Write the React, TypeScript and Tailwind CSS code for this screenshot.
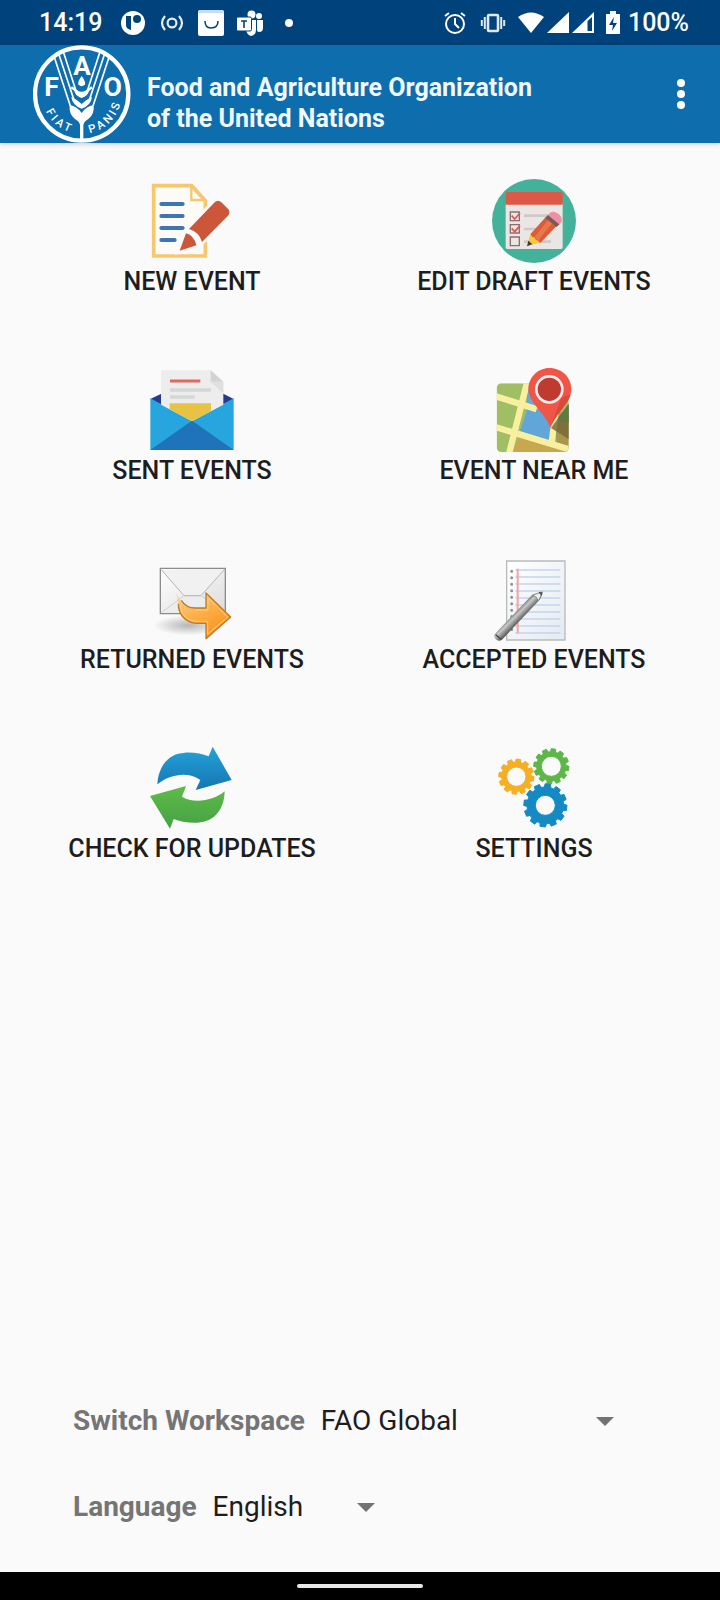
import type { ReactNode } from "react";

function gearPath(cx: number, cy: number, outer: number, root: number, hole: number, teeth = 12) {
	const step = (Math.PI * 2) / teeth;
	const points: string[] = [];
	for (let i = 0; i < teeth; i++) {
		const a = i * step + 0.12;
		for (const [offset, r] of [[-0.34, root], [-0.24, outer], [0.24, outer], [0.34, root]]) {
			const t = a + offset * step;
			points.push(`${(cx + Math.cos(t) * r).toFixed(1)} ${(cy + Math.sin(t) * r).toFixed(1)}`);
		}
	}
	return `M${points.join("L")}ZM${cx + hole} ${cy}a${hole} ${hole} 0 1 0 ${-2 * hole} 0a${hole} ${hole} 0 1 0 ${2 * hole} 0Z`;
}

function Icon({ viewBox, children }: { viewBox: string; children: ReactNode }) {
	return (
		<svg className="size-[84px]" viewBox={viewBox} aria-hidden="true">
			{children}
		</svg>
	);
}

function NewEventIcon() {
	return (
		<Icon viewBox="60 27 252 252">
			<path d="M71 47H185L226 92V258H71Z" fill="#fdfbf6" stroke="#f8c66f" strokeWidth="11" />
			<path d="M184 48V90H224" fill="none" stroke="#f8c66f" strokeWidth="7" />
			<path d="M94 102H158M94 138H158M94 174H158M94 210H134" stroke="#3f74b5" strokeWidth="12" strokeLinecap="round" />
			<path d="M146 244L168 184L252 96Q262 86 272 95L298 120Q303 130 294 140L214 220Z" fill="#fafafa" stroke="#fafafa" strokeWidth="14" />
			<path d="M177 177L254 97Q264 88 274 97L295 118Q302 127 294 137L216 216Q208 186 177 177Z" fill="#cc5639" />
			<path d="M149 242L168 190Q193 197 199 226Z" fill="#cc5639" />
		</Icon>
	);
}

function DraftIcon() {
	return (
		<Icon viewBox="66 27 252 252">
			<circle cx="192" cy="153" r="126" fill="#44b29b" />
			<path d="M107 100H278V232Q278 237 273 237H112Q107 237 107 232Z" fill="#ebe5e3" />
			<path d="M107 104V73Q107 66 114 66H271Q278 66 278 73V104Z" fill="#dd5847" />
			<path d="M162 137H234M162 177H200M162 215H243" stroke="#cfc9c7" strokeWidth="8" />
			<path d="M121 126H148V152H121ZM121 164H148V189H121ZM121 201H148V227H121Z" fill="none" stroke="#8b6f70" strokeWidth="4" />
			<path d="M125 137L134 147L150 129M125 175L134 185L150 167" fill="none" stroke="#d65a51" strokeWidth="5" />
			<path d="M173 226L181 191L208 213Z" fill="#f6c83d" />
			<path d="M181 193L228 140L262 166L213 217Q208 220 204 212Q196 212 194 203Q185 202 181 193Z" fill="#dc5c39" />
			<path d="M193 202L237 147L249 156L204 212Z" fill="#e8784a" />
			<path d="M181 191Q185 202 194 203Q196 212 204 212Q208 220 213 217L187 224L177 215Z" fill="#f6c83d" />
			<path d="M171 229L175 212L187 223Z" fill="#3d3b35" />
			<path d="M226 144L234 134L269 162L260 171Z" fill="#755c59" />
			<path d="M234 135Q241 124 252 125Q275 132 276 150Q275 157 268 163Z" fill="#f28da3" />
		</Icon>
	);
}

function SentIcon() {
	return (
		<Icon viewBox="60 24 252 252">
			<path d="M61 117L94 101H280L311 117L186 190Z" fill="#283a8d" />
			<path d="M61 115L186 183L311 115V270H61Z" fill="#27a5df" />
			<path d="M93 31H242L280 65V134L186 184L93 134Z" fill="#ededed" />
			<path d="M242 31L280 65H242Z" fill="#d2d3d3" />
			<path d="M242 65H280V100Z" fill="#dfdfdf" />
			<path d="M120 63H211" stroke="#de6961" strokeWidth="9" />
			<path d="M120 90H243M120 111H194" stroke="#d5d6d6" strokeWidth="10" />
			<path d="M119 130H243V153L186 184L119 148Z" fill="#e8c343" />
			<path d="M61 270L186 182L311 270Z" fill="#1e73b9" />
		</Icon>
	);
}

function MapIcon() {
	return (
		<Icon viewBox="66 24 252 252">
			<clipPath id="map-sheet">
				<rect x="80" y="70" width="216" height="206" rx="14" />
			</clipPath>
			<g clipPath="url(#map-sheet)">
				<path d="M80 70H296V276H80Z" fill="#a0be63" />
				<path d="M146 232L296 270V290H120Z" fill="#c8a84f" />
				<path d="M174 140L250 158L240 242L150 213Z" fill="#62a5d9" />
				<path d="M172 70H200V138H170Z" fill="#69a9d9" />
				<path d="M246 165L296 150V276L262 250Z" fill="#a7964b" />
				<path d="M72 107L200 148M72 200L304 270M172 64L116 286M256 160L244 256" stroke="#f8f0a0" strokeWidth="19" fill="none" />
				<path d="M243 204L300 126V240Z" fill="#746538" opacity=".8" />
				<path d="M262 178L300 128V190Z" fill="#5c7b43" />
			</g>
			<path d="M238 24C275 24 304 52 304 87C304 128 264 148 241 203C225 157 175 128 175 88C175 52 204 24 238 24Z" fill="#ef5647" />
			<path d="M272 118Q285 105 302 104C292 136 259 160 241 203Z" fill="#dc483c" />
			<circle cx="238" cy="88" r="39" fill="#bf3a2f" stroke="#f8eeee" strokeWidth="8" />
		</Icon>
	);
}

function ReturnedIcon() {
	return (
		<Icon viewBox="60 21 252 252">
			<defs>
				<linearGradient id="letter" x1="0" y1="0" x2="1" y2="1">
					<stop offset="0" stopColor="#fff" />
					<stop offset="1" stopColor="#dcdcdc" />
				</linearGradient>
				<linearGradient id="forward" x1="0" y1="0" x2="0.6" y2="1">
					<stop offset="0" stopColor="#fbd7a0" />
					<stop offset=".5" stopColor="#fcb14a" />
					<stop offset="1" stopColor="#f7941f" />
				</linearGradient>
				<radialGradient id="ground">
					<stop offset="0" stopColor="#999" stopOpacity=".7" />
					<stop offset="1" stopColor="#999" stopOpacity="0" />
				</radialGradient>
			</defs>
			<ellipse cx="175" cy="226" rx="105" ry="30" fill="url(#ground)" />
			<path d="M91 55H286V191H91Z" fill="url(#letter)" stroke="#8b8d8a" strokeWidth="4" />
			<path d="M95 187L162 137H213L282 187" fill="#ececec" stroke="#d2d2d2" strokeWidth="3" />
			<path d="M94 59L162 137H213L283 59" fill="#f1f1f1" stroke="#b5b6b4" strokeWidth="3" />
			<path d="M138 126C150 155 164 173 196 174H228V129L302 201L228 266V220H198C161 217 139 187 145 155Z" fill="url(#forward)" />
			<path d="M154 151C164 167 176 174 196 174H228V129L302 201L228 266V220H198C165 217 145 192 145 161" fill="none" stroke="#bd7b2a" strokeWidth="4" strokeLinejoin="round" />
			<path d="M150 166C155 196 170 211 198 214H233V253L293 201L234 143V180H196" fill="none" stroke="#ffcf85" strokeWidth="3" />
		</Icon>
	);
}

function AcceptedIcon() {
	return (
		<Icon viewBox="66 21 252 252">
			<defs>
				<linearGradient id="sheet" x1="0" y1="0" x2="1" y2="1">
					<stop offset="0" stopColor="#fff" />
					<stop offset="1" stopColor="#e3ebf1" />
				</linearGradient>
				<linearGradient id="barrel" gradientUnits="userSpaceOnUse" x1="134" y1="186" x2="156" y2="208">
					<stop offset="0" stopColor="#777" />
					<stop offset=".35" stopColor="#c9c9c9" />
					<stop offset="1" stopColor="#565656" />
				</linearGradient>
			</defs>
			<path d="M110 33H285V270H110Z" fill="url(#sheet)" stroke="#b9bbbb" strokeWidth="4" />
			<path d="M136 60H271M136 81H271M136 102H271M136 123H271M136 144H271M136 165H271M136 186H271M136 207H271M136 228H271M136 249H271" stroke="#c6d3ea" strokeWidth="4" />
			<path d="M143 56V250" stroke="#f7a3a3" strokeWidth="6" />
			<path d="M125 64V240" stroke="#8c9092" strokeWidth="9" strokeLinecap="round" strokeDasharray="0.1 19.3" />
			<path d="M72 259Q73 252 81 245L186 135Q192 130 215 126Q219 130 216 136Q213 147 202 157L96 269Q88 275 79 269Q72 264 72 259Z" fill="url(#barrel)" />
			<path d="M188 136L213 127Q218 130 205 152Q200 138 188 136Z" fill="#eeeeec" stroke="#777" strokeWidth="2" />
			<path d="M205 126L218 125L215 138Z" fill="#555" />
			<path d="M77 254L93 268" stroke="#444" strokeWidth="4" />
		</Icon>
	);
}

function UpdatesIcon() {
	return (
		<Icon viewBox="60 18 252 252">
			<defs>
				<linearGradient id="blue-arrow" x1="0" y1="0" x2="0" y2="1">
					<stop offset="0" stopColor="#24a3d8" />
					<stop offset="1" stopColor="#1675b4" />
				</linearGradient>
				<linearGradient id="green-arrow" x1="0" y1="0" x2="0" y2="1">
					<stop offset="0" stopColor="#5fbc48" />
					<stop offset="1" stopColor="#45a145" />
				</linearGradient>
			</defs>
			<path d="M82 133C85 84 110 41 165 38C195 37 216 41 236 49L248 20L305 120L197 150L211 120C177 94 120 101 82 133Z" fill="url(#blue-arrow)" />
			<path d="M60 168L168 138L156 170C187 190 248 185 284 154C283 203 258 246 202 248C172 249 150 244 131 237L120 266Z" fill="url(#green-arrow)" />
		</Icon>
	);
}

function SettingsIcon() {
	return (
		<Icon viewBox="66 18 252 252">
			<g fillRule="evenodd" strokeWidth="3" strokeLinejoin="round">
				<path d={gearPath(139, 110, 53, 44, 29)} fill="#f6ae22" stroke="#f6ae22" />
				<path d={gearPath(244, 79, 53, 44, 30)} fill="#5cb648" stroke="#5cb648" />
				<path d={gearPath(226, 196, 65, 55, 30)} fill="#158ac2" stroke="#158ac2" />
			</g>
		</Icon>
	);
}

function FaoLogo() {
	return (
		<svg className="size-[98px] shrink-0" viewBox="99 135 294 294" role="img" aria-label="FAO">
			<defs>
				<path id="motto-left" d="M131 318A119 119 0 0 0 236 401" />
				<path id="motto-right" d="M258 401A119 119 0 0 0 364 295" />
			</defs>
			<circle cx="245" cy="282" r="140" fill="none" stroke="#fff" strokeWidth="13" />
			<g fill="none" stroke="#fff">
				<path d="M163 172L211 318M177 164L222 300M191 158L232 285M327 172L279 318M313 164L268 300M299 158L258 285" strokeWidth="5" />
				<path d="M214 262Q230 273 245 286Q260 273 276 262" strokeWidth="7" />
				<path d="M245 350V424" strokeWidth="10" />
			</g>
			<path d="M245 228Q258 246 255 253Q245 265 235 253Q232 246 245 228Z" fill="#fff" />
			<path d="M222 270Q245 280 268 270Q264 288 245 294Q226 288 222 270ZM214 291Q226 295 245 312Q264 295 276 291Q273 316 245 326Q217 316 214 291ZM209 315Q232 319 245 339Q258 319 281 315Q284 342 266 356Q252 364 250 374H240Q238 364 224 356Q206 342 209 315Z" fill="#fff" />
			<g fill="#fff" fontFamily="Roboto, sans-serif" fontWeight="700" textAnchor="middle">
				<text x="246" y="226" fontSize="78">A</text>
				<text x="155" y="289" fontSize="80">F</text>
				<text x="338" y="289" fontSize="80">O</text>
			</g>
			<g fill="#fff" fontFamily="Roboto, sans-serif" fontWeight="500" fontSize="34" textAnchor="middle">
				<text><textPath href="#motto-left" startOffset="46%">F I A T</textPath></text>
				<text><textPath href="#motto-right" startOffset="48%">P A N I S</textPath></text>
			</g>
		</svg>
	);
}

function StatusBar() {
	return (
		<div className="flex h-[45px] items-center justify-between bg-[#00427c] pl-[39px] pr-[31px] text-[25px] font-medium text-white">
			<div className="flex items-center gap-[13px]">
				<span className="mr-[5px]">14:19</span>
				<svg className="size-[26px]" viewBox="0 0 26 26" fill="#fff" aria-hidden="true">
					<circle cx="13" cy="13" r="12" />
					<path d="M6 6H11V20Q6 19 6 15Z" fill="#00427c" />
					<circle cx="17" cy="9" r="4" fill="#00427c" />
				</svg>
				<svg className="size-[26px]" viewBox="0 0 26 26" fill="none" stroke="#e5edf5" strokeWidth="2.2" aria-hidden="true">
					<circle cx="13" cy="13" r="4.4" />
					<path d="M6 6Q0 13 6 20M20 6Q26 13 20 20" />
				</svg>
				<svg className="size-[26px]" viewBox="0 0 26 26" aria-hidden="true">
					<rect width="26" height="26" rx="2" fill="#fff" />
					<path d="M2 0H24L26 3H0Z" fill="#c5dcf2" />
					<path d="M7 11Q7 18 13 18Q20 18 20 11" fill="none" stroke="#00427c" strokeWidth="1.5" />
				</svg>
				<svg className="size-[26px]" viewBox="0 0 26 26" fill="#fff" aria-hidden="true">
					<circle cx="14.5" cy="4.5" r="4" />
					<circle cx="22" cy="6" r="3" />
					<path d="M9 10H19V20Q19 25 14 26Q10 25 9 20ZM20 10H26V18Q26 22 22 22Q20 22 20 20Z" />
					<rect x="-.5" y="7" width="15" height="14" rx="1.5" stroke="#00427c" />
					<path d="M4 11H10M7 11V18" stroke="#00427c" strokeWidth="1.6" />
				</svg>
				<span className="ml-[9px] size-2 rounded-full bg-white" />
			</div>
			<div className="flex items-center gap-[12px]">
				<svg className="size-[26px]" viewBox="0 0 26 26" fill="none" stroke="#fff" strokeWidth="2" aria-hidden="true">
					<circle cx="13" cy="14" r="9" />
					<path d="M13 8V14L17 18M3 6L7 3M23 6L19 3" />
				</svg>
				<svg className="size-[26px]" viewBox="0 0 26 26" fill="none" stroke="#dfe9f3" strokeWidth="2.6" aria-hidden="true">
					<rect x="8" y="5" width="10" height="16" rx="1" />
					<path d="M4.8 7V19M21.2 7V19M1.8 10V16M24.2 10V16" strokeWidth="2" />
				</svg>
				<div className="flex items-center gap-[3px]">
					<svg className="size-[26px]" viewBox="0 0 26 26" fill="#fff" aria-hidden="true">
						<path d="M0 7Q13 -2 26 7L13 23Z" />
					</svg>
					<svg className="h-[26px] w-[22px]" viewBox="0 0 22 26" fill="#fff" aria-hidden="true">
						<path d="M0 23L22 2V23Z" />
					</svg>
					<svg className="h-[26px] w-[22px]" viewBox="0 0 22 26" aria-hidden="true">
						<path d="M0 23L22 2V23Z" fill="#fff" />
						<path d="M15.5 11L20 7V21H15.5Z" fill="#00427c" />
					</svg>
				</div>
				<div className="flex items-center gap-2">
					<svg className="h-[26px] w-[14px]" viewBox="0 0 14 26" aria-hidden="true">
						<path d="M4 1H10V4H14V24H0V4H4Z" fill="#fff" />
						<path d="M8 7L3 15H7L6 21L11 13H7Z" fill="#00427c" />
					</svg>
					<span>100%</span>
				</div>
			</div>
		</div>
	);
}

function Header() {
	return (
		<header className="flex items-center bg-[#0e6dad] pl-[33px] pr-[27px] shadow-[0_1px_5px_rgba(0,0,0,0.2)]">
			<FaoLogo />
			<h1 className="ml-[16px] flex-1 pt-[18px] text-[25px] font-bold leading-[31px] text-[#f1f8fd]">
				Food and Agriculture Organization
				<br />
				of the United Nations
			</h1>
			<button type="button" aria-label="More options" className="flex flex-col items-center gap-[3px] px-2">
				<span className="size-2 rounded-full bg-white" />
				<span className="size-2 rounded-full bg-white" />
				<span className="size-2 rounded-full bg-white" />
			</button>
		</header>
	);
}

const menu = [
	{ title: "NEW EVENT", icon: <NewEventIcon /> },
	{ title: "EDIT DRAFT EVENTS", icon: <DraftIcon /> },
	{ title: "SENT EVENTS", icon: <SentIcon /> },
	{ title: "EVENT NEAR ME", icon: <MapIcon /> },
	{ title: "RETURNED EVENTS", icon: <ReturnedIcon /> },
	{ title: "ACCEPTED EVENTS", icon: <AcceptedIcon /> },
	{ title: "CHECK FOR UPDATES", icon: <UpdatesIcon /> },
	{ title: "SETTINGS", icon: <SettingsIcon /> },
];

function Dropdown({ id, label, option, width }: { id: string; label: string; option: string; width: string }) {
	return (
		<div className="flex items-center gap-[16px] text-[28px] leading-[36px]">
			<label htmlFor={id} className="font-bold text-[#757575]">
				{label}
			</label>
			<div className={`grid items-center ${width}`}>
				<select id={id} className="col-start-1 row-start-1 w-full appearance-none bg-transparent text-[#1d1d1d]">
					<option>{option}</option>
				</select>
				<svg className="pointer-events-none col-start-1 row-start-1 h-[9px] w-[18px] justify-self-end" viewBox="0 0 18 9" fill="#737373" aria-hidden="true">
					<path d="M0 0H18L9 9Z" />
				</svg>
			</div>
		</div>
	);
}

export default function App() {
	return (
		<div className="flex min-h-screen flex-col bg-[#fafafa] font-[Roboto,sans-serif]">
			<StatusBar />
			<Header />

			{/* Menu */}
			<main className="grid grid-cols-2 gap-y-[72px] pl-[21px] pr-[15px] pt-[36px]">
				{menu.map((item) => (
					<button key={item.title} type="button" className="flex flex-col items-center gap-[5px] text-[25px] font-medium leading-[28px] text-[#1d1d1d]">
						{item.icon}
						{item.title}
					</button>
				))}
			</main>

			{/* Workspace and language */}
			<div className="mt-auto flex flex-col gap-[50px] pb-[47px] pl-[73px] pt-[48px]">
				<Dropdown id="workspace" label="Switch Workspace" option="FAO Global" width="w-[293px]" />
				<Dropdown id="language" label="Language" option="English" width="w-[162px]" />
			</div>

			<div className="flex h-[28px] items-center justify-center bg-black">
				<span className="h-1 w-[126px] rounded-full bg-[#e8e8e8]" />
			</div>
		</div>
	);
}
